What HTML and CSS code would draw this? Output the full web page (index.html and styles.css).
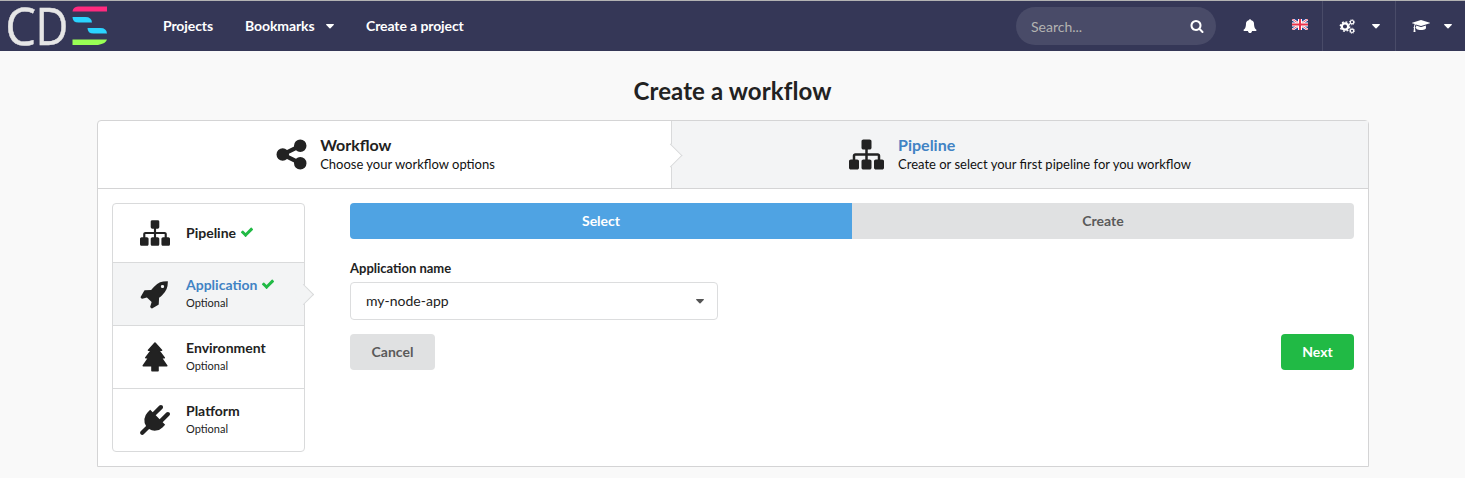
FILE: index.html
```html
<!DOCTYPE html>
<html lang="en">
<head>
<meta charset="utf-8">
<title>Create a workflow</title>
<link rel="stylesheet" href="styles.css">
</head>
<body>
<svg class="defs" aria-hidden="true">
  <symbol id="sitemap" viewBox="0 0 1792 1792"><path d="M1792 1248v320q0 40-28 68t-68 28h-320q-40 0-68-28t-28-68v-320q0-40 28-68t68-28h96v-192h-512v192h96q40 0 68 28t28 68v320q0 40-28 68t-68 28h-320q-40 0-68-28t-28-68v-320q0-40 28-68t68-28h96v-192h-512v192h96q40 0 68 28t28 68v320q0 40-28 68t-68 28h-320q-40 0-68-28t-28-68v-320q0-40 28-68t68-28h96v-192q0-52 38-90t90-38h512v-192h-96q-40 0-68-28t-28-68v-320q0-40 28-68t68-28h320q40 0 68 28t28 68v320q0 40-28 68t-68 28h-96v192h512q52 0 90 38t38 90v192h96q40 0 68 28t28 68z"/></symbol>
  <symbol id="check" viewBox="0 0 1792 1792"><path d="M1671 566q0 40-28 68l-724 724-136 136q-28 28-68 28t-68-28l-136-136-362-362q-28-28-28-68t28-68l136-136q28-28 68-28t68 28l294 295 656-657q28-28 68-28t68 28l136 136q28 28 28 68z"/></symbol>
  <symbol id="caret" viewBox="0 0 8 5"><path d="M.6 0h6.8q.9.2.3 1L4.5 4.3q-.5.4-1 0L.3 1Q-.3.2.6 0z"/></symbol>
</svg>
<nav class="navbar">
  <svg class="logo" viewBox="0 0 102 42" width="102" height="42">
    <g class="logo-text">
      <text transform="translate(-1.8 39.500) scale(.94 1)">C</text>
      <text transform="translate(28.600 39.500) scale(.87 1)">D</text>
    </g>
    <path fill="#ff2a7f" d="M65.500 6.500Q66 2 71 1.500h29v5H65.500z"/>
    <path fill="#2ad4ff" d="M65.500 12h13q6 0 6.500 5.500H71.500q-6 0-6-5.500z"/>
    <path fill="#2ad4ff" d="M80.500 23h13q6 0 6.500 5.500H86.500q-6 0-6-5.500z"/>
    <path fill="#99ff55" d="M65.500 34.500H100q-1 4-9 5.500H65.500z"/>
  </svg>
  <a class="nav-link projects">Projects</a>
  <a class="nav-link bookmarks">Bookmarks<svg class="caret"><use href="#caret"/></svg></a>
  <a class="nav-link">Create a project</a>
  <div class="search"><span>Search...</span>
    <svg width="14" height="14" viewBox="0 0 1792 1792"><path d="M1216 832q0-185-131.500-316.500t-316.500-131.500-316.500 131.500-131.500 316.500 131.500 316.500 316.500 131.500 316.500-131.500 131.500-316.500zm512 832q0 52-38 90t-90 38q-54 0-90-38l-343-342q-179 124-399 124-143 0-273.500-55.500t-225-150-150-225-55.500-273.500 55.500-273.500 150-225 225-150 273.500-55.500 273.500 55.500 225 150 150 225 55.500 273.500q0 220-124 399l343 343q37 37 37 90z"/></svg>
  </div>
  <div class="nav-icon bell"><svg width="14" height="14" viewBox="0 0 1792 1792"><path d="M1728 1408q0 52-38 90t-90 38h-448q0 106-75 181t-181 75-181-75-75-181h-448q-52 0-90-38t-38-90q50-42 91-88t85-119.500 74.500-158.500 50-206 19.500-260q0-152 117-282.500t307-158.500q-8-19-8-39 0-40 28-68t68-28 68 28 28 68q0 20-8 39 190 28 307 158.500t117 282.500q0 139 19.500 260t50 206 74.500 158.500 85 119.500 91 88z"/></svg></div>
  <div class="nav-icon flag"><svg width="16" height="11" viewBox="0 0 16 11">
    <path fill="#24408e" d="M0 0h16v11H0z"/>
    <path stroke="#fff" stroke-width="2.400" d="M0 0l16 11M16 0L0 11"/>
    <path stroke="#e8304a" stroke-width=".8" d="M0 0l16 11M16 0L0 11"/>
    <path fill="#fff" d="M6 0h4v11H6zM0 3.500h16v4H0z"/>
    <path fill="#e8304a" d="M7 0h2v11H7zM0 4.500h16v2H0z"/>
  </svg></div>
  <div class="nav-icon drop tools"><svg width="17" height="15" viewBox="0 0 17 15">
    <g class="gear"><circle cx="6" cy="7.500" r="3.200" stroke-width="2.300"/><circle cx="6" cy="7.500" r="4.700" stroke-width="1.400" stroke-dasharray="1.850 1.840"/>
    <circle cx="13" cy="3.200" r="1.700" stroke-width="1.200"/><circle cx="13" cy="3.200" r="2.600" stroke-width=".8" stroke-dasharray="1.120 .922"/>
    <circle cx="13" cy="11.800" r="1.700" stroke-width="1.200"/><circle cx="13" cy="11.800" r="2.600" stroke-width=".8" stroke-dasharray="1.120 .922"/></g>
  </svg><svg class="caret"><use href="#caret"/></svg></div>
  <div class="nav-icon drop learn"><svg width="18" height="14" viewBox="0 0 2304 1792"><path d="M1774 836l18 316q4 69-82 128t-235 93.500-323 34.500-323-34.500-235-93.500-82-128l18-316 574 181q22 7 48 7t48-7zm530-324q0 23-22 31l-1120 352q-4 1-10 1t-10-1l-652-206q-43 34-71 111.500t-34 178.500q63 36 63 109 0 69-58 107l58 433q2 14-8 25-9 11-24 11h-192q-15 0-24-11-10-11-8-25l58-433q-58-38-58-107 0-73 65-111 11-207 98-330l-333-104q-22-8-22-31t22-31l1120-352q4-1 10-1t10 1l1120 352q22 8 22 31z"/></svg><svg class="caret"><use href="#caret"/></svg></div>
</nav>
<h1 class="title">Create a workflow</h1>
<main class="wizard">
  <header class="steps">
    <div class="step current">
      <svg width="35" height="35" viewBox="0 0 1792 1792"><path d="M1344 1024q133 0 226.500 93.500t93.500 226.500-93.500 226.500-226.500 93.500-226.500-93.500-93.500-226.500q0-12 2-34l-360-180q-92 86-218 86-133 0-226.500-93.500t-93.500-226.500 93.500-226.500 226.500-93.500q126 0 218 86l360-180q-2-22-2-34 0-133 93.500-226.500t226.500-93.500 226.500 93.500 93.500 226.500-93.500 226.500-226.500 93.500q-126 0-218-86l-360 180q2 22 2 34t-2 34l360 180q92-86 218-86z"/></svg>
      <div class="step-text"><b>Workflow</b><span>Choose your workflow options</span></div>
    </div>
    <div class="step active">
      <svg width="35" height="35"><use href="#sitemap"/></svg>
      <div class="step-text"><b>Pipeline</b><span>Create or select your first pipeline for you workflow</span></div>
    </div>
  </header>
  <div class="content">
    <aside class="side">
      <div class="item first">
        <svg class="icon" width="30" height="30"><use href="#sitemap"/></svg>
        <div class="item-text"><b>Pipeline<svg class="check"><use href="#check"/></svg></b></div>
      </div>
      <div class="item active">
        <svg class="icon" width="30" height="30" viewBox="0 0 1792 1792"><path d="M1440 448q0-40-28-68t-68-28-68 28-28 68 28 68 68 28 68-28 28-68zm224-288q0 249-75.500 430.500t-253.500 360.500q-81 80-195 176l-20 379q-2 16-16 26l-384 224q-7 4-16 4-12 0-23-9l-64-64q-13-14-8-32l85-276-281-281-276 85q-3 1-9 1-14 0-23-9l-64-64q-17-19-5-39l224-384q10-14 26-16l379-20q96-114 176-195 188-187 358-258t431-71q14 0 24 9.500t10 22.500z"/></svg>
        <div class="item-text"><b>Application<svg class="check"><use href="#check"/></svg></b><span>Optional</span></div>
      </div>
      <div class="item">
        <svg class="icon" width="30" height="30" viewBox="0 0 30 30"><path stroke="#222" stroke-width="1.600" stroke-linejoin="round" d="M15 1l6.500 7.300h-3l5.700 7.500h-3l5.500 8H18v5h-6v-5H3.300l5.500-8h-3l5.700-7.500h-3z"/></svg>
        <div class="item-text"><b>Environment</b><span>Optional</span></div>
      </div>
      <div class="item">
        <svg class="icon" width="30" height="30" viewBox="0 0 1792 1792"><path d="M1755 453q37 38 37 90.500t-37 90.500l-401 400 150 150-160 160q-163 163-389.500 186.500t-411.500-100.500l-320 320q-38 37-91 37t-90-37-37-90 37-91l320-320q-124-185-100.500-411.500t186.500-389.500l160-160 150 150 400-401q38-37 91-37t90 37 37 90.500-37 90.500l-400 401 234 234 401-400q38-37 91-37t90 37z"/></svg>
        <div class="item-text"><b>Platform</b><span>Optional</span></div>
      </div>
    </aside>
    <section class="form">
      <div class="toggle"><button class="on">Select</button><button>Create</button></div>
      <label>Application name</label>
      <div class="select"><span>my-node-app</span><svg class="caret"><use href="#caret"/></svg></div>
      <div class="actions"><button class="cancel">Cancel</button><button class="next">Next</button></div>
    </section>
  </div>
</main>
</body>
</html>
```
FILE: styles.css
```css
* { box-sizing: border-box; }
body { margin: 0; height: 478px; overflow: hidden; background: #f9f9f9; color: #222; font: 14px/18px Lato, sans-serif; }
svg { display: block; flex: none; fill: #222; }
.defs { display: none; }
b { font-weight: 700; }

.navbar { display: flex; align-items: center; height: 51px; border-top: 1px solid #b3b3b3; background: #353757; color: #fff; font-weight: 700; }
.navbar svg { fill: #fff; }
.logo { margin: -1px 0 0 7px; overflow: visible; }
.logo-text { fill: #e6e6e6; stroke: #e6e6e6; stroke-width: .5px; font: 400 52px "Open Sans", sans-serif; }
.navbar .gear { fill: none; stroke: #fff; }
.caret { width: 8px; height: 5px; }
.nav-link { display: flex; align-items: center; white-space: nowrap; letter-spacing: -.1px; }
.projects { width: 82px; margin-left: 54px; }
.bookmarks { width: 121px; }
.bookmarks .caret { margin-left: 12px; }
.search { display: flex; align-items: center; justify-content: space-between; width: 200px; height: 38px; margin-left: auto; padding: 2px 12px 0 15px; border-radius: 19px; background: #494b68; color: #b3b3b1; font-weight: 400; }
.search svg { margin-top: -2px; }
.nav-icon { display: flex; align-items: center; height: 50px; }
.bell { width: 50px; padding-left: 27px; }
.flag { width: 56px; padding: 0 0 3px 26px; }
.drop { border-left: 1px solid #494b68; justify-content: space-between; }
.tools { width: 73px; padding: 0 15px 0 16px; }
.learn { width: 70px; padding: 0 13px 0 16px; }

.title { margin: 26px 0 15px; text-align: center; font-size: 24px; line-height: 28px; font-weight: 700; letter-spacing: .1px; font-variant-ligatures: common-ligatures; }
.wizard { width: 1272px; height: 347px; margin: 0 0 0 97px; border: 1px solid #d4d4d5; border-radius: 4px 4px 0 0; background: #fff; }
.steps { display: flex; height: 68px; border-bottom: 1px solid #d4d4d5; }
.step { position: relative; display: flex; align-items: center; justify-content: center; color: #222; }
.step.current { width: 574px; border-right: 1px solid #d9dadb; }
.step.active { flex: 1; background: #f3f4f5; }
.step-text { display: flex; flex-direction: column; padding-bottom: 2px; color: #111; font-size: 13px; }
.step-text b { font-size: 16px; line-height: 20px; color: #222; }
.step.current .step-text { margin-left: 11px; }
.step.active .step-text { margin-left: 14px; }
.step.active b, .item.active b { color: #4183c4; }
.step.current::after, .item.active::after { content: ""; position: absolute; z-index: 1; width: 16px; height: 16px; border: 1px solid #d9dadb; border-width: 1px 1px 0 0; transform: rotate(45deg); }
.step.current::after { right: -8px; top: 26px; background: #fff; }

.content { display: flex; justify-content: space-between; padding: 14px; }
.side { width: 193px; height: 249px; border: 1px solid #d9dadb; border-radius: 4px; }
.item { position: relative; display: flex; align-items: center; height: 63px; padding-left: 27px; border-top: 1px solid #d9dadb; }
.item.first { height: 58px; border-top: 0; }
.item.active { background: #f3f4f5; }
.item.active::after { width: 14px; height: 14px; right: -7px; top: 24px; background: #f3f4f5; }
.item-text { display: flex; flex-direction: column; margin-left: 16px; padding-bottom: 2px; font-size: 11px; }
.item-text b { display: flex; align-items: center; font-size: 14px; line-height: 19px; }
.check { width: 14px; height: 14px; margin-left: 4px; fill: #21ba45; }
.form { display: flex; flex-direction: column; width: 1004px; }
button { border: 0; padding: 0 0 2px; height: 36px; border-radius: 4px; background: #e0e1e2; color: #5a5a5a; font: 700 14px Lato, sans-serif; }
.toggle { display: flex; }
.toggle button { flex: 1; border-radius: 0 4px 4px 0; }
.toggle .on { border-radius: 4px 0 0 4px; background: #4fa3e3; color: #fff; }
label { margin: 20px 0 5px; font-size: 13px; font-weight: 700; }
.select { display: flex; align-items: center; justify-content: space-between; width: 368px; height: 38px; padding: 0 13px 0 15px; border: 1px solid #dcddde; border-radius: 4px; }
.select .caret { fill: #555; }
.actions { display: flex; justify-content: space-between; margin-top: 14px; }
.cancel { width: 85px; }
.next { width: 73px; background: #21ba45; color: #fff; }
```
